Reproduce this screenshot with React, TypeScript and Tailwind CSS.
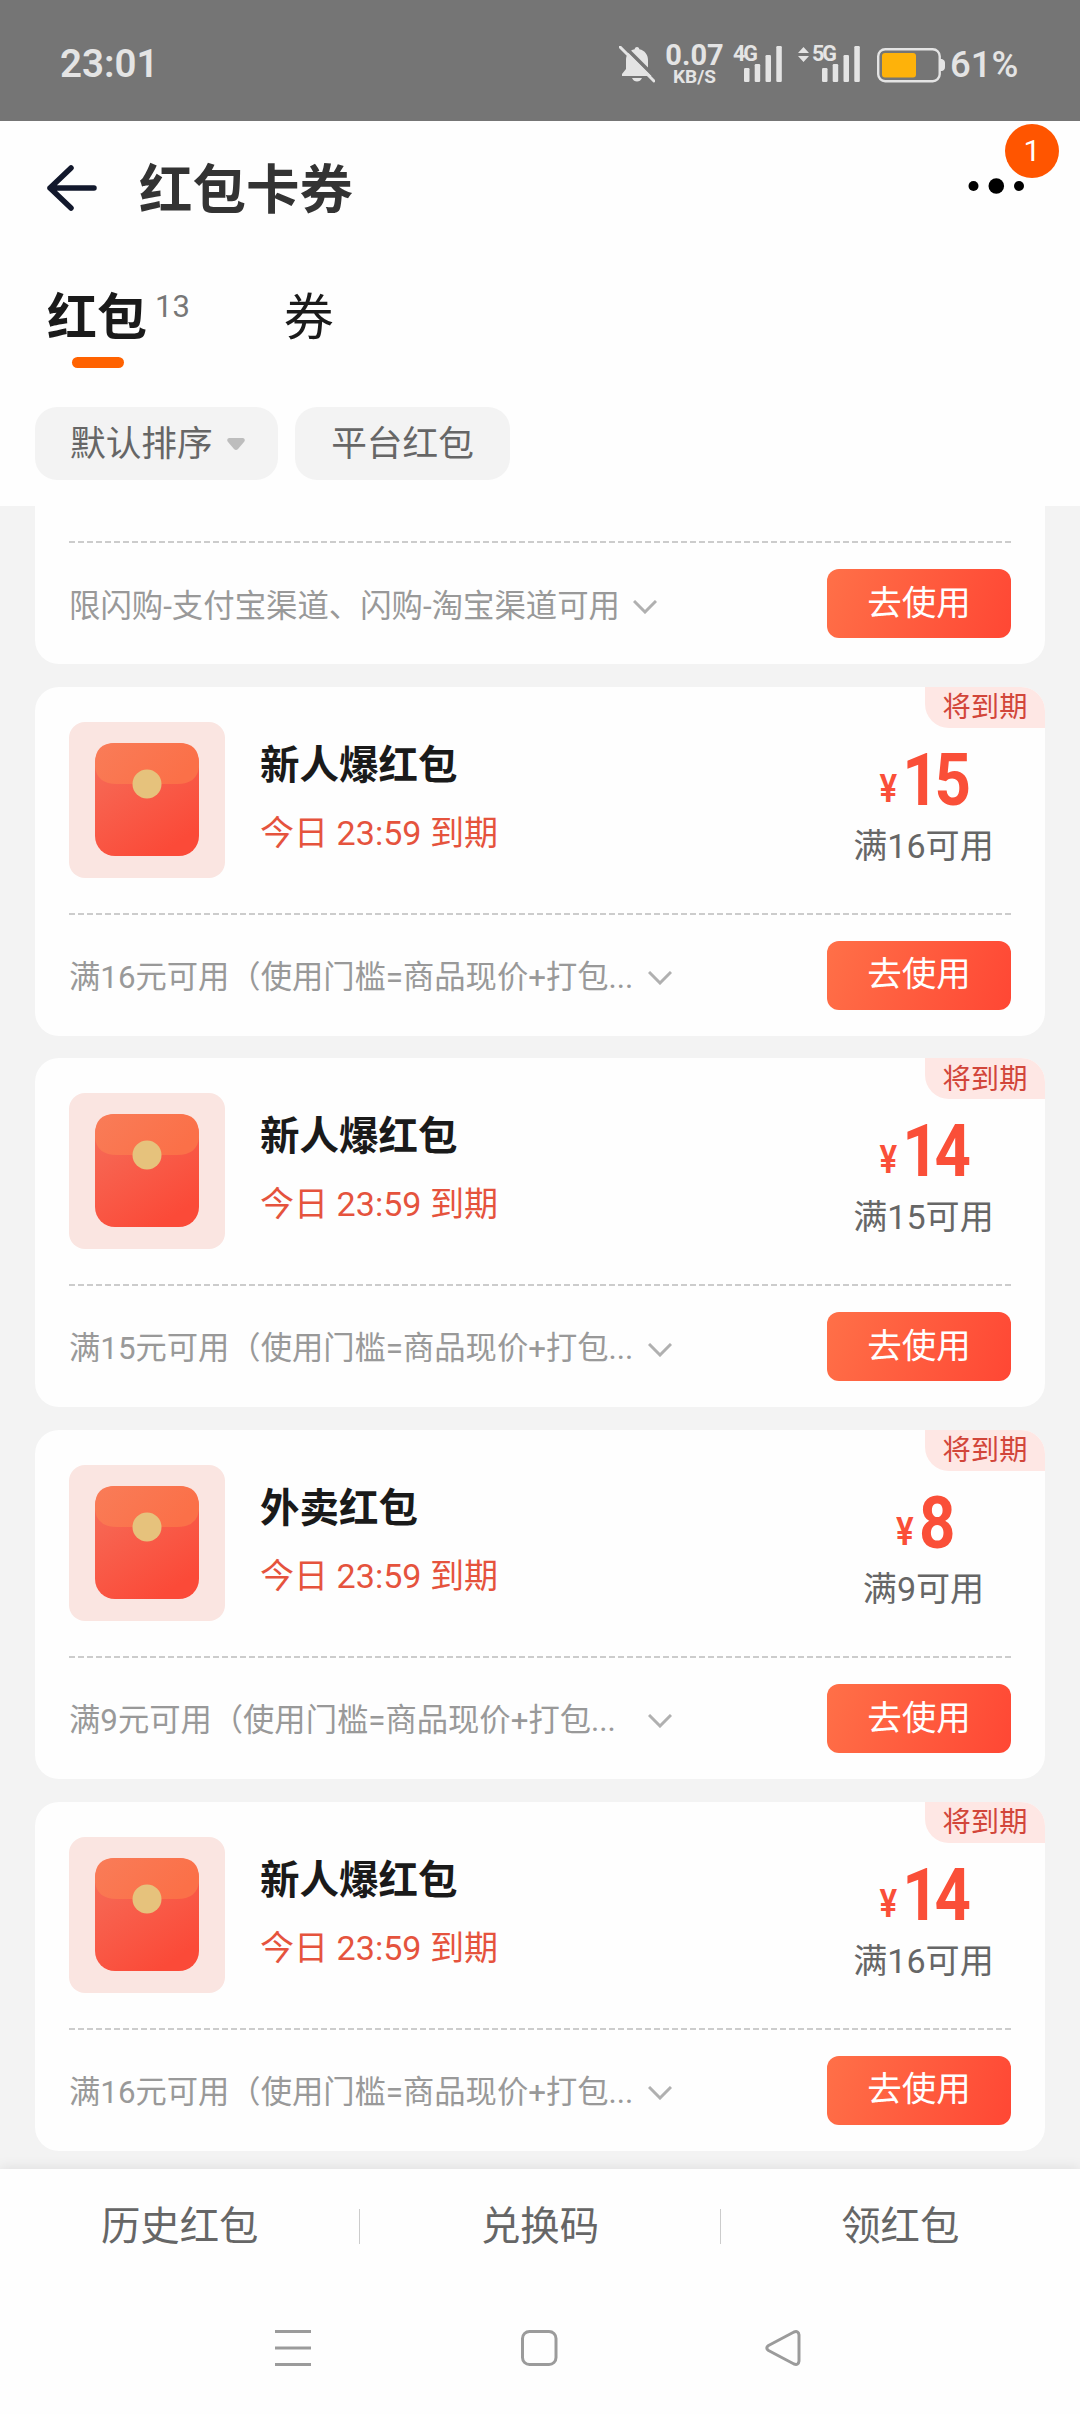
import React from 'react';

interface Coupon {
  id: number;
  title: string;
  amount: string;
  condition: string;
  rule: string;
}

const coupons: Coupon[] = [
  { id: 1, title: '新人爆红包', amount: '15', condition: '满16可用', rule: '满16元可用（使用门槛=商品现价+打包...' },
  { id: 2, title: '新人爆红包', amount: '14', condition: '满15可用', rule: '满15元可用（使用门槛=商品现价+打包...' },
  { id: 3, title: '外卖红包', amount: '8', condition: '满9可用', rule: '满9元可用（使用门槛=商品现价+打包...' },
  { id: 4, title: '新人爆红包', amount: '14', condition: '满16可用', rule: '满16元可用（使用门槛=商品现价+打包...' },
];

function SignalBars() {
  return (
    <svg className="shrink-0" width="38" height="37" viewBox="0 0 38 37" fill="#e4e4e4">
      <rect x="0" y="23" width="5.500" height="14" rx="1.200" />
      <rect x="10.700" y="19" width="5.500" height="18" rx="1.200" />
      <rect x="21.500" y="10" width="5.500" height="27" rx="1.200" />
      <rect x="32.300" y="1" width="5.500" height="36" rx="1.200" />
    </svg>
  );
}

function StatusBar() {
  return (
    <div className="flex h-[121px] items-center bg-[#757575] pl-[60px] pr-[62px] pt-[6px] text-[#e4e4e4]">
      <span className="mt-[2px] text-[38.500px] font-semibold leading-none">23:01</span>
      <div className="ml-auto flex h-[38px] w-[399px] items-start">
        <svg className="mt-[1px] shrink-0" width="36" height="37" viewBox="0 0 36 37">
          <path d="M18 1c1.500 0 2.300 1 2.300 2.300C26 4.500 29 9 29 14v9l4 5v2H3v-2l4-5v-9C7 9 10 4.500 15.700 3.300 15.700 2 16.500 1 18 1z" fill="#e4e4e4" />
          <path d="M13 32h10c-1 2.500-3 3.500-5 3.500s-4-1-5-3.500z" fill="#e4e4e4" />
          <path d="M3-2L38 33" stroke="#757575" strokeWidth="3.500" />
          <path d="M1 1L35 35" stroke="#e4e4e4" strokeWidth="3" strokeLinecap="round" />
        </svg>
        <div className="ml-[9px] flex w-[61px] shrink-0 flex-col items-center font-bold">
          <span className="mt-[-1px] text-[29px] leading-[22px]">0.07</span>
          <span className="mt-[2px] text-[19px] leading-[17px]">KB/S</span>
        </div>
        <div className="ml-[8px] flex shrink-0 items-start">
          <span className="mr-[-13px] w-[24px] text-[21.500px] font-bold leading-[18px] tracking-[-2px]">4G</span>
          <SignalBars />
        </div>
        <div className="ml-[16px] flex shrink-0 items-start">
          <svg className="mr-[3px] mt-[2px]" width="11" height="15" viewBox="0 0 11 15" fill="#e4e4e4">
            <path d="M5.500 0L11 6H0zM5.500 15L11 9H0z" />
          </svg>
          <span className="mr-[-13px] w-[23px] text-[21.500px] font-bold leading-[18px] tracking-[-2px]">5G</span>
          <SignalBars />
        </div>
        <svg className="ml-[17px] mt-[3px] shrink-0" width="68" height="35" viewBox="0 0 68 35">
          <rect x="1.200" y="1.200" width="61.500" height="32" rx="7" fill="none" stroke="#e4e4e4" strokeWidth="2.400" />
          <rect x="5" y="5" width="34" height="24.500" rx="3" fill="#feb20a" />
          <path d="M63 11h2q3 1 3 4v4q0 3-3 4h-2z" fill="#e4e4e4" />
        </svg>
        <span className="ml-[5px] text-[36.500px] font-medium leading-[40px]">61%</span>
      </div>
    </div>
  );
}

function Header() {
  return (
    <div className="flex h-[134px] items-center pl-[46px] pr-[56px]">
      <svg width="52" height="46" viewBox="0 0 52 46" fill="none" stroke="#12182c" strokeWidth="5.500" strokeLinecap="round" strokeLinejoin="round">
        <path d="M25 3L4 23l21 20M4 23h44" />
      </svg>
      <h1 className="ml-[41px] mt-[6px] text-[53.500px] font-bold leading-none text-[#333333]">红包卡券</h1>
      <div className="relative ml-auto">
        <svg width="56" height="20" viewBox="0 0 56 20" fill="#000">
          <circle cx="5.500" cy="8" r="5" />
          <circle cx="28.300" cy="8" r="7.800" />
          <circle cx="51" cy="8" r="5" />
        </svg>
        <span className="absolute left-[37px] top-[-54px] flex h-[54px] w-[54px] items-center justify-center rounded-full bg-[#ff5500] text-[30px] leading-none text-white">
          1
        </span>
      </div>
    </div>
  );
}

function Tabs() {
  return (
    <div className="flex h-[152px] items-start pl-[47px] pt-[38px] text-[50px] leading-[50px] text-[#1a1a1a]">
      <div className="flex flex-col items-center">
        <span className="font-bold">红包</span>
        <span className="ml-[2px] mt-[14px] h-[11px] w-[52px] rounded-full bg-[#ff6200]" />
      </div>
      <span className="ml-[8px] text-[31px] leading-[27px] text-[#777777]">13</span>
      <span className="ml-[94px]">券</span>
    </div>
  );
}

function Filters() {
  return (
    <div className="flex h-[99px] items-start gap-[17px] pl-[35px] text-[35.700px] text-[#666666]">
      <button className="flex h-[73px] w-[243px] items-center rounded-[22px] bg-[#f3f3f3] pl-[35px] pt-[2px]">
        默认排序
        <svg className="ml-[14px]" width="18" height="13" viewBox="0 0 18 13" fill="#bdbdbd">
          <path d="M2 0h14q3 1 1 4l-6 7q-2 2-4 0L1 4Q-1 1 2 0z" />
        </svg>
      </button>
      <button className="h-[73px] w-[215px] rounded-[22px] bg-[#f3f3f3] pt-[2px]">平台红包</button>
    </div>
  );
}

function Envelope() {
  return (
    <svg width="156" height="156" viewBox="0 0 156 156">
      <defs>
        <linearGradient id="body" x1="0" y1="0" x2="0.600" y2="1">
          <stop offset="0" stopColor="#f5705c" />
          <stop offset="1" stopColor="#fb4a38" />
        </linearGradient>
        <linearGradient id="flap" x1="0" y1="0" x2="1" y2="0.400">
          <stop offset="0" stopColor="#f97c58" />
          <stop offset="1" stopColor="#fb7048" />
        </linearGradient>
      </defs>
      <rect width="156" height="156" rx="16" fill="#fae5e1" />
      <rect x="26" y="21" width="104" height="113" rx="20" fill="url(#body)" />
      <path d="M46 21h64q20 0 20 20v4q-2 17-22 17H48q-20 0-22-17v-4q0-20 20-20z" fill="url(#flap)" />
      <circle cx="78" cy="62" r="14.500" fill="#e6c27c" />
    </svg>
  );
}

function DashedLine() {
  return (
    <div className="h-[2px] bg-[repeating-linear-gradient(90deg,#cccccc_0_6px,transparent_6px_9px)]" />
  );
}

function CardFooter({ rule, wide }: { rule: string; wide?: boolean }) {
  return (
    <div className="flex h-[95px] items-end">
      <div className="flex h-[69px] items-center">
        <span className={wide ? 'mt-[6px] w-[579px] whitespace-nowrap text-[31.300px] text-[#999999]' : 'mt-[6px] w-[564px] whitespace-nowrap text-[31.400px] text-[#999999]'}>
          {rule}
        </span>
        <svg className="mt-[6px]" width="24" height="14" viewBox="0 0 24 14" fill="none" stroke="#b0b0b0" strokeWidth="3">
          <path d="M1 1l11 11L23 1" />
        </svg>
      </div>
      <button className="ml-auto h-[69px] w-[184px] rounded-[12px] bg-linear-[110deg] from-[#ff7048] to-[#ff4734] text-[34.500px] text-white">
        去使用
      </button>
    </div>
  );
}

function CouponCard({ coupon }: { coupon: Coupon }) {
  return (
    <div className="relative h-[349px] shrink-0 overflow-hidden rounded-[24px] bg-[#fefefe] px-[34px] pt-[35px]">
      <div className="flex h-[191px] items-start">
        <Envelope />
        <div className="ml-[35px] flex flex-col">
          <span className="mt-[19px] text-[39.500px] font-bold leading-[50px] text-[#1a1a1a]">{coupon.title}</span>
          <span className="mt-[19px] text-[34.100px] leading-[46px] text-[#e5533d]">今日 23:59 到期</span>
        </div>
        <div className="ml-auto flex w-[175px] flex-col items-center">
          <div className="flex h-[101px] scale-x-[0.87] items-baseline pt-[21px] leading-[74px] text-[#fa4f38]">
            <span className="relative top-[-3px] mr-[6px] text-[38px] font-semibold">¥</span>
            <span className="text-[73px] font-bold tracking-[-5px]">{coupon.amount}</span>
          </div>
          <span className="text-[34.100px] leading-[46px] text-[#666666]">{coupon.condition}</span>
        </div>
      </div>
      <DashedLine />
      <CardFooter rule={coupon.rule} wide />
      <span className="absolute right-0 top-0 flex h-[41px] w-[120px] items-center justify-center rounded-bl-[24px] bg-[#fee7e4] pt-[2px] text-[28.300px] leading-none text-[#d2463a]">
        将到期
      </span>
    </div>
  );
}

function BottomBar() {
  return (
    <div className="relative flex h-[115px] items-center bg-[#fefefe] text-[39.400px] text-[#666666] shadow-[0_-2px_12px_rgba(0,0,0,0.08)]">
      <span className="flex-1 text-center">历史红包</span>
      <span className="h-[35px] w-px bg-[#cccccc]" />
      <span className="flex-1 text-center">兑换码</span>
      <span className="h-[35px] w-px bg-[#cccccc]" />
      <span className="flex-1 text-center">领红包</span>
    </div>
  );
}

function NavBar() {
  return (
    <div className="relative flex h-[130px] items-start bg-[#fefefe] pl-[274px] pt-[45px]">
      <svg width="38" height="38" viewBox="0 0 38 38" stroke="#9b9b9b" strokeWidth="3">
        <path d="M1 2.500h36M1 19h36M1 35.500h36" />
      </svg>
      <svg className="ml-[208px]" width="38" height="38" viewBox="0 0 38 38" fill="none" stroke="#9b9b9b" strokeWidth="3">
        <rect x="2.500" y="2.500" width="33.500" height="33" rx="7" />
      </svg>
      <svg className="ml-[207px]" width="38" height="38" viewBox="0 0 38 38" fill="none" stroke="#9b9b9b" strokeWidth="3" strokeLinejoin="round">
        <path d="M29 3q4.500-1.500 5 3v26q-0.500 4.500-5 3L3.500 21.500q-3.500-2.500 0-5z" />
      </svg>
    </div>
  );
}

export default function App() {
  return (
    <div className="flex h-[2414px] w-[1080px] flex-col overflow-hidden bg-[#fefefe] font-[Roboto,'Noto_Sans_CJK_SC',sans-serif]">
      <StatusBar />
      <Header />
      <Tabs />
      <Filters />
      <div className="flex h-[1663px] flex-col gap-[22.670px] overflow-hidden bg-[#f3f3f3] px-[35px]">
        {/* 上一张红包卡片的底部 */}
        <div className="h-[158px] shrink-0 rounded-b-[24px] bg-[#fefefe] px-[34px] pt-[35px]">
          <DashedLine />
          <CardFooter rule="限闪购-支付宝渠道、闪购-淘宝渠道可用" />
        </div>
        {coupons.map((coupon) => (
          <CouponCard key={coupon.id} coupon={coupon} />
        ))}
      </div>
      <BottomBar />
      <NavBar />
    </div>
  );
}
